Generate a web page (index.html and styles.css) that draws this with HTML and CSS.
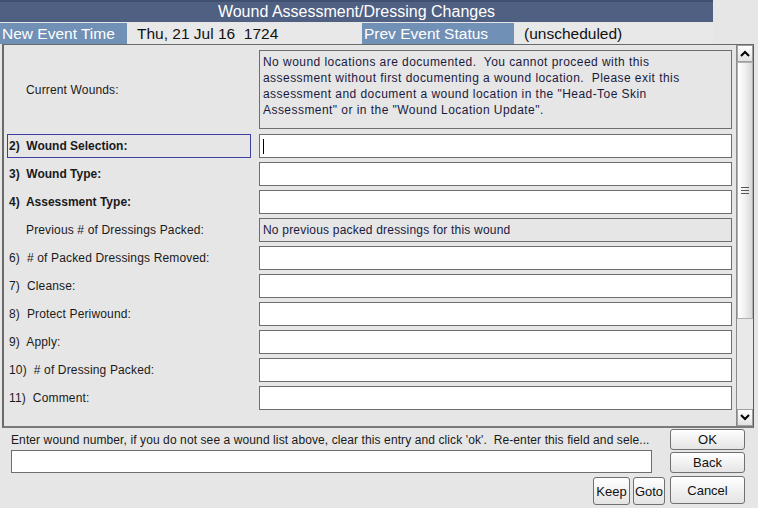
FILE: index.html
```html
<!DOCTYPE html>
<html lang="en">
<head>
  <meta charset="UTF-8" />
  <title>Wound Assessment/Dressing Changes</title>
  <link rel="stylesheet" href="styles.css">
</head>
<body>
  <div class="window">
    <div class="title-bar">Wound Assessment/Dressing Changes</div>

    <div class="event-row">
      <div class="event-label first">New Event Time</div>
      <div class="event-value first">Thu, 21 Jul 16&nbsp; 1724</div>
      <div class="event-label second">Prev Event Status</div>
      <div class="event-value second">(unscheduled)</div>
    </div>

    <div class="form-panel">
      <div class="form-scroll">
        <div class="form-row wounds-row">
          <div class="field-label indent">Current Wounds:</div>
          <div class="field-box readonly tall">No wound locations are documented.&nbsp; You cannot proceed with this<br>assessment without first documenting a wound location.&nbsp; Please exit this<br>assessment and document a wound location in the "Head-Toe Skin<br>Assessment" or in the "Wound Location Update".</div>
        </div>

        <div class="form-row">
          <div class="field-label bold focused">2)&nbsp; Wound Selection:</div>
          <div class="field-box"><span class="caret"></span></div>
        </div>
        <div class="form-row">
          <div class="field-label bold">3)&nbsp; Wound Type:</div>
          <div class="field-box"></div>
        </div>
        <div class="form-row">
          <div class="field-label bold">4)&nbsp; Assessment Type:</div>
          <div class="field-box"></div>
        </div>
        <div class="form-row">
          <div class="field-label indent">Previous # of Dressings Packed:</div>
          <div class="field-box readonly">No previous packed dressings for this wound</div>
        </div>
        <div class="form-row">
          <div class="field-label">6)&nbsp; # of Packed Dressings Removed:</div>
          <div class="field-box"></div>
        </div>
        <div class="form-row">
          <div class="field-label">7)&nbsp; Cleanse:</div>
          <div class="field-box"></div>
        </div>
        <div class="form-row">
          <div class="field-label">8)&nbsp; Protect Periwound:</div>
          <div class="field-box"></div>
        </div>
        <div class="form-row">
          <div class="field-label">9)&nbsp; Apply:</div>
          <div class="field-box"></div>
        </div>
        <div class="form-row">
          <div class="field-label">10)&nbsp; # of Dressing Packed:</div>
          <div class="field-box"></div>
        </div>
        <div class="form-row">
          <div class="field-label">11)&nbsp; Comment:</div>
          <div class="field-box"></div>
        </div>
      </div>

      <div class="scrollbar">
        <div class="scroll-btn">
          <svg width="10" height="7" viewBox="0 0 10 7"><path d="M1 6 L5 2 L9 6" fill="none" stroke="#000" stroke-width="2"/></svg>
        </div>
        <div class="scroll-track">
          <div class="scroll-thumb">
            <span class="grip"></span><span class="grip"></span><span class="grip"></span>
          </div>
        </div>
        <div class="scroll-btn">
          <svg width="10" height="7" viewBox="0 0 10 7"><path d="M1 1 L5 5 L9 1" fill="none" stroke="#000" stroke-width="2"/></svg>
        </div>
      </div>
    </div>

    <div class="entry-panel">
      <div class="entry-main">
        <div class="entry-hint">Enter wound number, if you do not see a wound list above, clear this entry and click 'ok'.&nbsp; Re-enter this field and sele...</div>
        <div class="entry-input"></div>
        <div class="small-buttons">
          <button class="btn keep">Keep</button>
          <button class="btn goto">Goto</button>
        </div>
      </div>
      <div class="entry-buttons">
        <button class="btn wide">OK</button>
        <button class="btn wide">Back</button>
        <button class="btn wide tall">Cancel</button>
      </div>
    </div>
  </div>
</body>
</html>
```

FILE: styles.css
```css
body {
  margin: 0;
  padding: 0;
  background-color: #e6e6e6;
  font-family: "Liberation Sans", Arial, sans-serif;
  font-size: 12px;
  color: #1a1a1a;
}

.window {
  width: 758px;
  height: 508px;
  overflow: hidden;
  display: flex;
  flex-direction: column;
}

.title-bar {
  width: 713px;
  height: 22px;
  box-sizing: border-box;
  border-top: 2px solid #3f5070;
  background-color: #4f6083;
  color: #ffffff;
  font-size: 16px;
  line-height: 19px;
  text-align: center;
}

.event-row {
  display: flex;
  height: 21px;
  margin-top: 1px;
  font-size: 15.5px;
  line-height: 21px;
}

.event-label {
  background-color: #7190b6;
  color: #ffffff;
  padding-left: 2px;
}

.event-label.first {
  width: 125px;
}

.event-label.second {
  width: 150px;
}

.event-value {
  background-color: #e8e8e8;
  color: #111;
}

.event-value.first {
  width: 225px;
  padding-left: 10px;
}

.event-value.second {
  width: 189px;
  padding-left: 10px;
}

.form-panel {
  display: flex;
  height: 384px;
  margin-left: 2px;
  width: 752px;
  box-sizing: border-box;
  border-left: 2px solid #6a6a6a;
  border-top: 1px solid #6a6a6a;
  border-right: 1px solid #5a5a5a;
  border-bottom: 2px solid #7a7a7a;
}

.form-scroll {
  flex: 1;
  padding: 5px 0 0 3px;
  display: flex;
  flex-direction: column;
  gap: 4px;
}

.form-row {
  display: flex;
  align-items: center;
  gap: 8px;
  height: 24px;
}

.form-row.wounds-row {
  height: 79px;
  margin-bottom: 1px;
}

.field-label {
  width: 244px;
  height: 24px;
  box-sizing: border-box;
  line-height: 22px;
  padding-left: 1px;
  border: 1px solid transparent;
  white-space: nowrap;
  letter-spacing: 0.15px;
}

.field-label.indent {
  padding-left: 18px;
}

.field-label.bold {
  font-weight: bold;
  letter-spacing: 0;
}

.field-label.focused {
  border-color: #3d3fa3;
}

.field-box {
  width: 473px;
  height: 24px;
  box-sizing: border-box;
  border: 1px solid #6e6e6e;
  background-color: #ffffff;
  padding: 2px 3px;
  line-height: 18px;
  display: flex;
  align-items: center;
  letter-spacing: 0.2px;
}

.field-box.readonly {
  background-color: #e6e6e6;
  color: #1a1a40;
}

.field-box.tall {
  height: 79px;
  display: block;
  line-height: 16px;
  padding-top: 3px;
  letter-spacing: 0.45px;
  white-space: nowrap;
}

.caret {
  width: 1px;
  height: 15px;
  background-color: #000;
}

.scrollbar {
  width: 16px;
  display: flex;
  flex-direction: column;
  border-left: 1px solid #8a8a8a;
}

.scroll-btn {
  height: 17px;
  background: linear-gradient(#ffffff, #e2e2e2);
  border: 1px solid #a0a0a0;
  box-sizing: border-box;
  display: flex;
  align-items: center;
  justify-content: center;
}

.scroll-track {
  flex: 1;
  background-color: #e9e9e9;
}

.scroll-thumb {
  height: 257px;
  background: linear-gradient(to right, #ffffff, #f0f0f0 50%, #d8d8d8);
  border: 1px solid #b0b0b0;
  box-sizing: border-box;
  display: flex;
  flex-direction: column;
  align-items: center;
  justify-content: center;
  gap: 2px;
}

.grip {
  width: 8px;
  height: 1px;
  background-color: #555;
}

.entry-panel {
  display: flex;
  padding-left: 11px;
}

.entry-main {
  width: 641px;
  display: flex;
  flex-direction: column;
}

.entry-hint {
  margin-top: 4px;
  height: 16px;
  line-height: 16px;
  white-space: nowrap;
  overflow: hidden;
  color: #1a1a1a;
  letter-spacing: 0.1px;
}

.entry-input {
  margin-top: 2px;
  height: 23px;
  box-sizing: border-box;
  border: 1px solid #6e6e6e;
  background-color: #ffffff;
}

.small-buttons {
  display: flex;
  justify-content: flex-end;
  gap: 3px;
  margin-top: 4px;
  margin-right: -13px;
}

.entry-buttons {
  margin-left: 18px;
  display: flex;
  flex-direction: column;
  gap: 2px;
  padding-top: 1px;
}

.btn {
  font-family: "Liberation Sans", Arial, sans-serif;
  font-size: 13px;
  color: #111;
  background: linear-gradient(#ffffff, #e4e4e4);
  border: 1px solid #707070;
  border-radius: 3px;
  padding: 0;
  height: 28px;
}

.btn.wide {
  width: 75px;
  height: 21px;
}

.btn.wide.tall {
  height: 28px;
  margin-top: 1px;
}

.btn.keep {
  width: 37px;
}

.btn.goto {
  width: 32px;
}
```
